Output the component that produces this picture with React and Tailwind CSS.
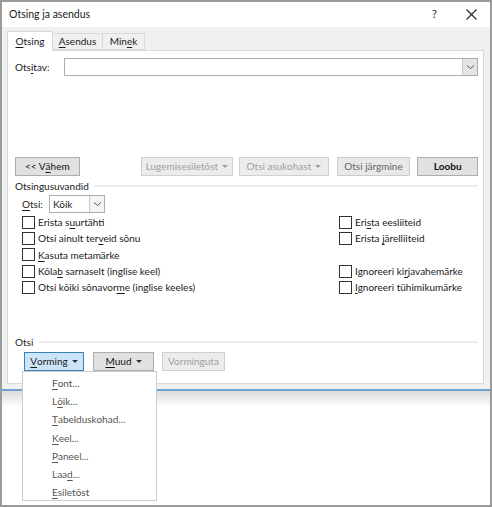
import React from 'react';

const U = ({ children }) => <span className="underline underline-offset-[2px] decoration-[1px]">{children}</span>;

function Check({ children }) {
  return (
    <div className="flex items-center h-[16.3px] gap-[3px] whitespace-nowrap">
      <div className="w-[13px] h-[13px] border border-[#333] bg-white shrink-0" />
      <span className="leading-none">{children}</span>
    </div>
  );
}

function Btn({ children, disabled, w, className = '' }) {
  return (
    <div
      className={`h-[19px] flex items-center justify-center whitespace-nowrap border ${
        disabled ? 'border-[#d0d0d0] bg-[#ececec] text-[#a0a0a0]' : 'border-[#adadad] bg-[#e1e1e1] text-[#111]'
      } ${w} ${className}`}
    >
      {children}
    </div>
  );
}

const Caret = ({ light }) => (
  <span className={`inline-block ml-[4px] mb-[1px] border-l-[3px] border-r-[3px] border-t-[3px] border-l-transparent border-r-transparent ${light ? 'border-t-[#a0a0a0]' : 'border-t-[#333]'}`} />
);

const Arrow = () => (
  <svg width="9" height="6" viewBox="0 0 9 6">
    <path d="M1 1.5 L4.5 4.5 L8 1.5" fill="none" stroke="#555" strokeWidth="1" />
  </svg>
);

export default function App() {
  return (
    <div className="w-[492px] h-[507px] border-2 border-[#9b9b9b] bg-white relative overflow-hidden text-[10px] text-[#1a1a1a]" style={{ fontFamily: 'Lato, "Noto Sans", sans-serif' }}>
      {/* title */}
      <div className="h-[25px] flex items-center pl-[7px] pr-[13px] bg-white">
        <span className="text-[10.5px]">Otsing ja asendus</span>
        <span className="ml-auto mr-[29px] text-[11px]">?</span>
        <svg width="11" height="11" viewBox="0 0 11 11">
          <path d="M0.5 0.5 L10.5 10.5 M10.5 0.5 L0.5 10.5" stroke="#222" strokeWidth="1.1" />
        </svg>
      </div>

      {/* body */}
      <div className="bg-[#f0f0f0] h-[362px] pt-[4px] px-[5px] pr-[6px]">
        <div className="flex items-end h-[19px] relative z-10">
          <div className="h-[20px] w-[46px] bg-white border border-b-0 border-[#d9d9d9] flex items-center justify-center mb-[-1px]">
            <U>O</U>tsing
          </div>
          <div className="h-[17px] w-[50px] border border-l-0 border-[#d9d9d9] flex items-center justify-center">
            <U>A</U>sendus
          </div>
          <div className="h-[17px] w-[42px] border border-l-0 border-[#d9d9d9] flex items-center justify-center">
            Min<U>e</U>k
          </div>
        </div>

        <div className="bg-white border border-[#d9d9d9] h-[334px] px-[7px] pr-[5px] pt-[7px] flex flex-col">
          <div className="flex items-center h-[18px]">
            <span className="w-[49px]">Ots<U>i</U>tav:</span>
            <div className="flex-1 h-[18px] border border-[#adadad] flex justify-end">
              <div className="w-[15px] h-full bg-[#e5e5e5] border-l border-[#c8c8c8] flex items-center justify-center">
                <Arrow />
              </div>
            </div>
          </div>

          <div className="flex items-center mt-[81px] h-[19px]">
            <Btn w="w-[65px]">&lt;&lt; V<U>ä</U>hem</Btn>
            <Btn disabled w="w-[93px]" className="ml-[61px]">Lugemisesiletõst<Caret light /></Btn>
            <Btn disabled w="w-[90px]" className="ml-[6px]">Otsi asukohast<Caret light /></Btn>
            <Btn w="w-[74px]" className="ml-[8px] !border-[#cccccc] !bg-[#e8e8e8] !text-[#666]">Otsi järgmine</Btn>
            <Btn w="w-[61px]" className="ml-[7px] font-bold">Loobu</Btn>
          </div>

          <div className="flex items-center mt-[2px] h-[16px]">
            <span>Otsingusuvandid</span>
            <div className="flex-1 h-[2px] bg-[#ececec] ml-[5px]" />
          </div>

          <div className="pl-[7px] mt-[1px]">
            <div className="flex items-center h-[18px]">
              <span className="w-[27px]"><U>O</U>tsi:</span>
              <div className="w-[56px] h-[18px] border border-[#adadad] flex">
                <span className="pl-[3px] flex-1 leading-[16px]">Kõik</span>
                <div className="w-[15px] border-l border-[#c8c8c8] bg-[#f5f5f5] flex items-center justify-center">
                  <Arrow />
                </div>
              </div>
            </div>

            <div className="flex mt-[1px]">
              <div className="w-[317px]">
                <Check>Erista s<U>u</U>urtähti</Check>
                <Check>Otsi ainult ter<U>v</U>eid sõnu</Check>
                <Check><U>K</U>asuta metamärke</Check>
                <Check>Kõla<U>b</U> sarnaselt (inglise keel)</Check>
                <Check>Otsi kõiki sõnavor<U>m</U>e (inglise keeles)</Check>
              </div>
              <div>
                <Check>Eri<U>s</U>ta eesliiteid</Check>
                <Check>Erista <U>j</U>ärelliiteid</Check>
                <div className="h-[16.3px]" />
                <Check>Ignoreeri ki<U>r</U>javahemärke</Check>
                <Check><U>I</U>gnoreeri tühimikumärke</Check>
              </div>
            </div>
          </div>

          <div className="flex items-center mt-[39px] h-[16px]">
            <span>Otsi</span>
            <div className="flex-1 h-[2px] bg-[#ececec] ml-[6px]" />
          </div>

          <div className="flex items-center mt-[2px] pl-[9px] h-[19px]">
            <div className="w-[60px] h-[19px] border border-[#3c7fb1] bg-[#cce4f7] flex items-center justify-center">
              <U>V</U>orming<Caret />
            </div>
            <Btn w="w-[61px]" className="ml-[9px]"><U>M</U>uud<Caret /></Btn>
            <Btn disabled w="w-[63px]" className="ml-[8px]">Vorminguta</Btn>
          </div>
        </div>
      </div>

      <div className="h-[2px] bg-[#6fa3d6]" />
      <div className="h-[16px] bg-gradient-to-b from-[#dcdcdc] to-white" />

      {/* dropdown menu */}
      <div className="absolute left-[20px] top-[369px] w-[135px] h-[130px] bg-white border border-[#cccccc] pt-[2px] text-[#555] z-20">
        {[
          <><U>F</U>ont...</>,
          <>L<U>õ</U>ik...</>,
          <><U>T</U>abelduskohad...</>,
          <><U>K</U>eel...</>,
          <><U>P</U>aneel...</>,
          <>Laa<U>d</U>...</>,
          <><U>E</U>siletõst</>,
        ].map((t, i) => (
          <div key={i} className="h-[18.3px] flex items-center pl-[29px]">{t}</div>
        ))}
      </div>
    </div>
  );
}
